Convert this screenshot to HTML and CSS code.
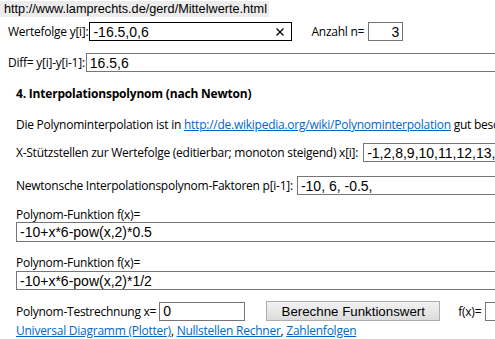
FILE: index.html
```html
<!DOCTYPE html>
<html>
<head>
<meta charset="utf-8">
<link rel="stylesheet" href="styles.css">
</head>
<body>
<div class="urlbar">http://www.lamprechts.de/gerd/Mittelwerte.html</div>
<div class="row row-werte">
  <span class="lbl">Wertefolge y[i]:</span>
  <span class="field focused w-werte"><span class="val">-16.5,0,6</span><svg class="clear" width="8" height="8" viewBox="0 0 8 8"><path d="M0.5 0.5L7.5 7.5M7.5 0.5L0.5 7.5" stroke="#000" stroke-width="1.2" fill="none"/></svg></span>
  <span class="lbl anzahl">Anzahl n=</span>
  <span class="field w-n right"><span class="val">3</span></span>
</div>
<div class="row row-diff">
  <span class="lbl">Diff= y[i]-y[i-1]:</span>
  <span class="field wide"><span class="val">16.5,6</span></span>
</div>
<div class="section">
  <h4 class="heading">4. Interpolationspolynom (nach Newton)</h4>
  <p class="text">Die Polynominterpolation ist in <a href="#">http://de.wikipedia.org/wiki/Polynominterpolation</a> gut beschrieben.</p>
  <div class="row row-x">
    <span class="lbl">X-Stützstellen zur Wertefolge (editierbar; monoton steigend) x[i]:</span>
    <span class="field wide"><span class="val">-1,2,8,9,10,11,12,13,14,15</span></span>
  </div>
  <div class="row row-newton">
    <span class="lbl">Newtonsche Interpolationspolynom-Faktoren p[i-1]:</span>
    <span class="field wide"><span class="val">-10, 6, -0.5,</span></span>
  </div>
  <div class="block block-f1">
    <div class="lbl">Polynom-Funktion f(x)=</div>
    <span class="field full tall"><span class="val">-10+x*6-pow(x,2)*0.5</span></span>
  </div>
  <div class="block block-f2">
    <div class="lbl">Polynom-Funktion f(x)=</div>
    <span class="field full"><span class="val">-10+x*6-pow(x,2)*1/2</span></span>
  </div>
  <div class="row row-test">
    <span class="lbl">Polynom-Testrechnung x=</span>
    <span class="field w-x"><span class="val">0</span></span>
    <button class="btn">Berechne Funktionswert</button>
    <span class="lbl fx">f(x)=</span>
    <span class="field wide"><span class="val"></span></span>
  </div>
  <div class="links"><a href="#">Universal Diagramm (Plotter)</a>, <a href="#">Nullstellen Rechner</a>, <a href="#">Zahlenfolgen</a></div>
</div>
</body>
</html>
```
FILE: styles.css
```css
html, body {
  margin: 0;
  padding: 0;
  overflow: hidden;
  background: #fff;
}
body {
  font-family: "Open Sans", "Noto Sans", sans-serif;
  font-size: 12px;
  color: #000;
  width: 495px;
  height: 339px;
}
.urlbar {
  display: inline-block;
  background: #ececec;
  font-family: "Liberation Sans", Arial, sans-serif;
  font-size: 12.7px;
  line-height: 16px;
  height: 16px;
  padding: 0 2px 0 4px;
  color: #000;
}
.row {
  display: flex;
  align-items: center;
  white-space: nowrap;
}
.row > * {
  flex-shrink: 0;
}
.lbl {
  white-space: nowrap;
  letter-spacing: -0.25px;
}
.field {
  display: inline-flex;
  align-items: center;
  box-sizing: border-box;
  height: 19px;
  border: 1px solid #767676;
  background: #fff;
  font-family: "Liberation Sans", Arial, sans-serif;
  font-size: 14px;
  padding: 0 3px;
  flex-shrink: 0;
  overflow: hidden;
  white-space: nowrap;
}
.field.focused {
  border-color: #000;
}
.field .val {
  flex: 1;
}
.field.right .val {
  text-align: right;
}
.clear {
  flex-shrink: 0;
  margin-right: 4px;
}
.row-werte {
  margin: 5px 0 0 8px;
}
.w-werte {
  width: 203px;
  margin-left: 1px;
}
.anzahl {
  margin-left: 19px;
  margin-right: 4px;
}
.w-n {
  width: 35px;
}
.row-diff {
  margin: 12px 0 0 8px;
}
.row-diff .field {
  margin-left: 1px;
}
.wide {
  width: 600px;
}
.section {
  padding-left: 16px;
}
.heading {
  margin: 14px 0 0 0;
  font-size: 12px;
  font-weight: bold;
  line-height: 16px;
  letter-spacing: -0.2px;
}
.text {
  margin: 15px 0 0 0;
  line-height: 16px;
  white-space: nowrap;
  letter-spacing: -0.25px;
}
a {
  color: #0066cc;
  text-decoration: underline;
}
.row-x {
  margin-top: 10px;
}
.row-x .field {
  margin-left: 5px;
}
.row-newton {
  margin-top: 14px;
}
.row-newton .field {
  margin-left: 4px;
}
.block .lbl {
  line-height: 16px;
}
.block-f1 {
  margin-top: 12px;
}
.block-f1 .lbl {
  margin-bottom: -1px;
}
.block-f2 {
  margin-top: 13px;
}
.full {
  width: 600px;
  display: flex;
}
.tall {
  height: 20px;
}
.row-test {
  margin-top: 11px;
}
.w-x {
  width: 86px;
  margin-left: 3px;
}
.btn {
  box-sizing: border-box;
  height: 20px;
  width: 174px;
  margin-left: 21px;
  padding: 0;
  border: 1px solid #adadad;
  background: linear-gradient(#f2f2f2, #dcdcdc);
  font-family: "Liberation Sans", Arial, sans-serif;
  font-size: 13.3px;
  color: #000;
  border-radius: 0;
}
.fx {
  margin-left: 18px;
  margin-right: 4px;
}
.links {
  line-height: 16px;
  margin-top: 2px;
  white-space: nowrap;
  letter-spacing: -0.25px;
}
```
